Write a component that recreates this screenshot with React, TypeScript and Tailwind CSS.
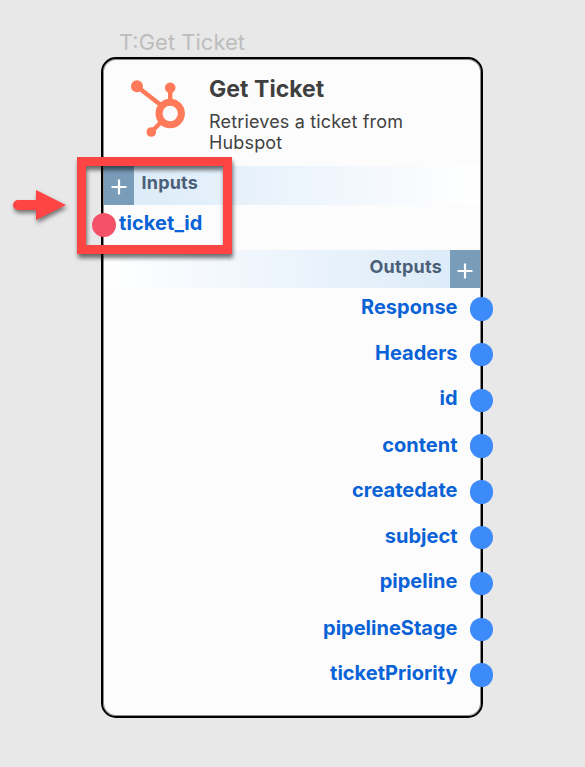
import React from "react";

const outputs = [
  { name: "Response", pad: "pt-[6px]" },
  { name: "Headers", pad: "pt-[6px]" },
  { name: "id", pad: "pt-[5px]" },
  { name: "content", pad: "pt-[7px]" },
  { name: "createdate", pad: "pt-[6px]" },
  { name: "subject", pad: "pt-[6px]" },
  { name: "pipeline", pad: "pt-[5px]" },
  { name: "pipelineStage", pad: "pt-[6px]" },
  { name: "ticketPriority", pad: "pt-[6px]" },
];

function HubspotMark() {
  return (
    <svg className="block h-[60px] w-[60px]" viewBox="130 79 60 60" fill="none">
      <path d="M137 86.5L162 106M170.2 88V104M151.3 132L162 121" stroke="#ff7a59" strokeWidth="4.4" />
      <circle cx="137" cy="86.3" r="6" fill="#ff7a59" />
      <circle cx="170.2" cy="87.7" r="5.3" fill="#ff7a59" />
      <circle cx="151.3" cy="132" r="4.8" fill="#ff7a59" />
      <circle cx="170.2" cy="113.5" r="11.2" stroke="#ff7a59" strokeWidth="7" />
    </svg>
  );
}

function AddButton() {
  return (
    <button className="flex h-full w-[30px] shrink-0 items-center justify-center bg-[#799cb8] pt-[3px]">
      <svg className="h-4 w-4" viewBox="0 0 16 16" stroke="#fff" strokeWidth="2.2">
        <path d="M8 0.5V15.5M0.5 8H15.5" />
      </svg>
    </button>
  );
}

export default function App() {
  return (
    <main className="relative h-[767px] w-[585px] overflow-hidden bg-[#e8e8e8] pl-[101px] pt-[29px] font-['Inter',sans-serif]">
      <div className="h-[28px] pl-[18px] text-[22px] leading-[27px] whitespace-nowrap text-[#bdbdbd]">T:Get Ticket</div>
      <section className="flex h-[661px] w-[382px] flex-col rounded-[15px] border-2 border-black bg-[#fcfcfc] px-px shadow-[inset_0_0_0_1px_rgba(0,0,0,0.45)]">
        <header className="flex h-[107px] shrink-0 pl-[26px] pt-[20px]">
          <HubspotMark />
          <div className="w-[225px] pl-[19px] text-[#3f3f3f]">
            <h1 className="-mt-[4px] text-[23px] leading-[28px] font-bold tracking-[0.04px]">Get Ticket</h1>
            <p className="mt-[8px] text-[18px] leading-[21px] tracking-[0.16px] text-[#424242]">Retrieves a ticket from Hubspot</p>
          </div>
        </header>
        <div className="flex h-[39px] shrink-0 bg-linear-to-r from-[#d9eaf7] via-[#ecf4fc] to-white">
          <AddButton />
          <span className="pl-[7.5px] pt-[5px] text-[18px] leading-[24px] font-bold tracking-[0.2px] text-[#4b6078]">Inputs</span>
        </div>
        <div className="flex h-[45px] shrink-0 items-center">
          <span className="-ml-[12px] mt-[-5px] h-[23.5px] w-[23.5px] rounded-full bg-[#f45267]" />
          <span className="-mt-[9px] pl-[3.5px] text-[20px] leading-[26px] font-bold tracking-[0.08px] text-[#0962d6]">ticket_id</span>
        </div>
        <div className="flex h-[38px] shrink-0 justify-end bg-linear-to-r from-white via-[#ecf4fc] to-[#d9eaf7]">
          <span className="pr-[8px] pt-[5px] text-[18px] leading-[24px] font-bold tracking-[0.25px] text-[#4b6078]">Outputs</span>
          <AddButton />
        </div>
        <ul className="-mr-[13px] flex flex-col">
          {outputs.map((o) => (
            <li key={o.name} className="flex h-[45.8px] items-start justify-end">
              <span className={`${o.pad} pr-[12px] text-[20px] leading-[26px] font-bold text-[#0962d6]`}>{o.name}</span>
              <span className="mt-[9px] h-[23.5px] w-[23.5px] rounded-full bg-[#3d8bfa]" />
            </li>
          ))}
        </ul>
      </section>
      <div className="absolute left-[77px] top-[157px] h-[97px] w-[155px] border-[9px] border-[#ff4444] drop-shadow-[1px_4px_2px_rgba(0,0,0,0.55)]" />
      <svg className="absolute left-[8px] top-[184px] h-[44px] w-[64px] drop-shadow-[1px_3px_2px_rgba(0,0,0,0.5)]" viewBox="8 184 64 44" fill="#ff4444">
        <path d="M18 200H36V190L66 205L36 220V210H18A5 5 0 0 1 18 200Z" />
      </svg>
    </main>
  );
}
